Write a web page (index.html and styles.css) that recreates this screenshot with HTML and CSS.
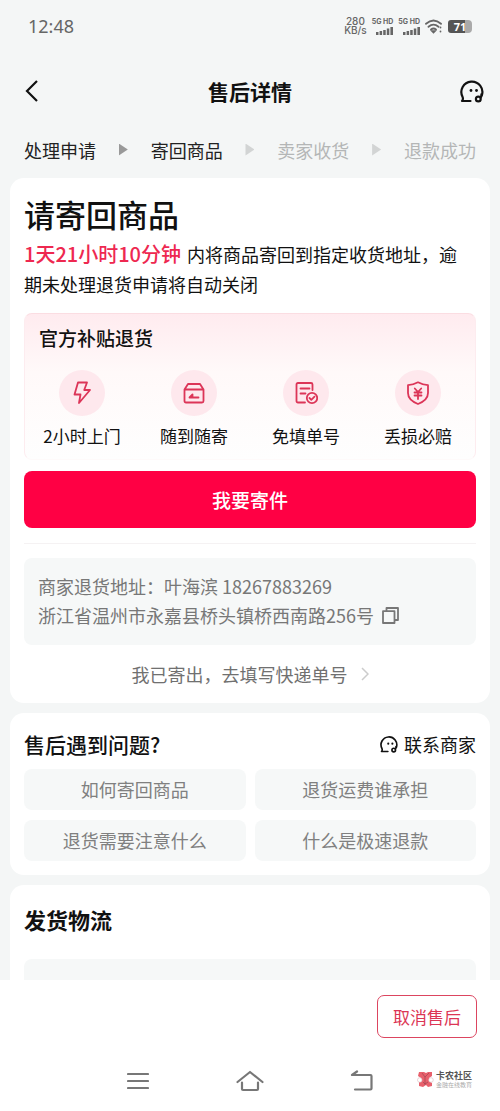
FILE: index.html
```html
<!DOCTYPE html>
<html lang="zh-CN">
<head>
<meta charset="utf-8">
<meta name="viewport" content="width=device-width, initial-scale=1">
<title>售后详情</title>
<link rel="stylesheet" href="styles.css">
</head>
<body>
<svg class="defs" width="0" height="0" aria-hidden="true">
  <symbol id="service" viewBox="0 0 24 24">
    <path d="M10.500 22H2Q3.500 20.500 2.600 18A10.500 10.500 0 1 1 21.800 16.500" fill="none" stroke="currentColor" stroke-width="2.200" stroke-linecap="round" stroke-linejoin="round"/>
    <path d="M21.500 14.500Q21.800 18 20 19.500" fill="none" stroke="currentColor" stroke-width="2.200"/>
    <circle cx="18.300" cy="20" r="2.400" fill="none" stroke="currentColor" stroke-width="2.200"/>
    <circle cx="11" cy="11.500" r="1.400" fill="currentColor"/>
    <circle cx="16.500" cy="11.500" r="1.400" fill="currentColor"/>
  </symbol>
  <symbol id="signal" viewBox="0 0 17 8">
    <path d="M0 5h2.500v3H0zM3.600 4h2.500v4H3.600zM7.200 3h2.500v5H7.200zM10.800 1.500h2.500V8h-2.500zM14.400 0H17v8h-2.600z" fill="currentColor"/>
  </symbol>
</svg>

<header class="top">
  <div class="status">
    <span class="clock">12:48</span>
    <div class="indicators">
      <span class="speed"><span>280</span><span>KB/s</span></span>
      <span class="network"><span>5G HD</span><svg width="17" height="8"><use href="#signal"/></svg></span>
      <span class="network"><span>5G HD</span><svg width="17" height="8"><use href="#signal"/></svg></span>
      <svg class="wifi" width="18" height="15" viewBox="0 0 18 15" fill="none" stroke="currentColor" stroke-width="1.800" stroke-linecap="round">
        <path d="M1 4.800Q8.500-1.700 16 4.800M3.500 7.800Q8.500 3.500 13.500 7.800M6 10.500Q8.500 8.500 11 10.500"/>
        <path d="M7.200 12.200h2.600L8.500 13.500zM15.500 8.500v.1M15.500 12.500v.1"/>
      </svg>
      <span class="battery">71</span>
    </div>
  </div>
  <div class="titlebar">
    <button class="icon-button back" type="button" aria-label="返回">
      <svg width="16" height="24" viewBox="0 0 16 24" fill="none" stroke="currentColor" stroke-width="2.200"><path d="M13 2L3 12l10 10"/></svg>
    </button>
    <h1>售后详情</h1>
    <button class="icon-button" type="button" aria-label="客服"><svg width="24" height="24"><use href="#service"/></svg></button>
  </div>
  <ol class="steps">
    <li class="done">处理申请</li>
    <li class="arrow done" aria-hidden="true"></li>
    <li class="done">寄回商品</li>
    <li class="arrow" aria-hidden="true"></li>
    <li>卖家收货</li>
    <li class="arrow" aria-hidden="true"></li>
    <li>退款成功</li>
  </ol>
</header>

<main>
  <section class="card return">
    <h2>请寄回商品</h2>
    <p class="deadline"><strong>1天21小时10分钟</strong>内将商品寄回到指定收货地址，逾期未处理退货申请将自动关闭</p>
    <div class="benefits">
      <h3>官方补贴退货</h3>
      <ul>
        <li>
          <span class="badge"><svg width="24" height="24" viewBox="0 0 24 24"><path d="M8 1.500h9L14.200 9H20L9 22l1.500-8.500H4.500z"/></svg></span>
          2小时上门
        </li>
        <li>
          <span class="badge"><svg width="24" height="24" viewBox="0 0 24 24"><path d="M2.500 8.500L6 3h12l3.500 5.500V20q0 1.500-1.500 1.500H4Q2.500 21.500 2.500 20zM2.500 8.500h19"/><path d="M7.500 16.500h9M7.500 16.500l3-3v3"/></svg></span>
          随到随寄
        </li>
        <li>
          <span class="badge"><svg width="24" height="24" viewBox="0 0 24 24"><path d="M11 21.500H4Q2.500 21.500 2.500 20V3.500Q2.500 2 4 2h13q1.500 0 1.500 1.500V9M6.500 7.500h9M6.500 12.500h5"/><circle cx="18" cy="17" r="5.200"/><path d="M15.500 17l1.800 1.800 3.200-3.200"/></svg></span>
          免填单号
        </li>
        <li>
          <span class="badge"><svg width="24" height="24" viewBox="0 0 24 24"><path d="M12 1.300Q17 4 22 4.200V12q0 7-10 11Q2 19 2 12V4.200Q7 4 12 1.300z"/><path d="M8.800 7.500L12 11l3.200-3.500M12 11v7M8.500 11.500h7M8.500 14.500h7"/></svg></span>
          丢损必赔
        </li>
      </ul>
    </div>
    <button class="primary" type="button">我要寄件</button>
    <hr>
    <div class="address">
      <p>商家退货地址：叶海滨 18267883269</p>
      <p>浙江省温州市永嘉县桥头镇桥西南路256号
        <button class="copy" type="button" aria-label="复制地址"><svg width="17" height="17" viewBox="0 0 17 17" fill="none" stroke="currentColor" stroke-width="1.800" stroke-linejoin="round"><path d="M1 4.200h11.500V16H1zM4.500 4V1H16v12h-3.300"/></svg></button>
      </p>
    </div>
    <a class="tracking" href="#tracking">我已寄出，去填写快递单号
      <svg width="8" height="14" viewBox="0 0 8 14" fill="none" stroke="#ccc" stroke-width="1.500"><path d="M1 1l6 6-6 6"/></svg>
    </a>
  </section>

  <section class="card help">
    <div class="help-head">
      <h2>售后遇到问题?</h2>
      <a href="#contact"><svg width="18" height="18"><use href="#service"/></svg>联系商家</a>
    </div>
    <div class="questions">
      <button type="button">如何寄回商品</button>
      <button type="button">退货运费谁承担</button>
      <button type="button">退货需要注意什么</button>
      <button type="button">什么是极速退款</button>
    </div>
  </section>

  <section class="card logistics">
    <h2>发货物流</h2>
    <div class="placeholder"></div>
  </section>
</main>

<footer>
  <div class="actions"><button type="button">取消售后</button></div>
  <nav>
    <button type="button" aria-label="最近任务"><svg width="22" height="20" viewBox="0 0 22 20"><path d="M1 3h20M1 10h20M1 17h20"/></svg></button>
    <button type="button" aria-label="主屏幕"><svg width="28" height="22" viewBox="0 0 28 22"><path d="M1.500 12L14 2l12.500 10M6 12.500V19q0 1 1 1h14q1 0 1-1v-6.500"/></svg></button>
    <button type="button" aria-label="后退"><svg width="24" height="22" viewBox="0 0 24 22"><path d="M7 1.500L2 5h18.500q1 0 1 1v12.500q0 1-1 1H5"/></svg></button>
  </nav>
  <div class="watermark">
    <svg width="17" height="17" viewBox="0 0 17 17"><path d="M2 1h5l2 1 2-1h4v4l-3 2v3l3 2v3l-4 1-2-2-3 2-4-1v-4l2-2v-2L1 5z" fill="#e8606c"/><circle cx="2.800" cy="9" r="2.300" fill="#fff" stroke="#d8b8bc" stroke-width=".6"/><circle cx="14" cy="9" r="2.300" fill="#fff" stroke="#d8b8bc" stroke-width=".6"/><path d="M5 2l3 4 4-4M8 6v8M6 11l2 2 3-2" fill="none" stroke="#9d4650" stroke-width=".7"/></svg>
    <span><b>卡农社区</b><small>金融在线教育</small></span>
  </div>
</footer>
</body>
</html>
```
FILE: styles.css
```css
* { box-sizing: border-box; }

body {
  margin: 0;
  height: 100vh;
  display: flex;
  flex-direction: column;
  background: #f4f6f6;
  color: #111;
  font-family: "Noto Sans CJK SC", sans-serif;
  font-size: 18px;
  line-height: 30px;
}

h1, h2, h3, p, ul, ol { margin: 0; padding: 0; }
ul, ol { list-style: none; }
button { font: inherit; color: inherit; background: none; border: 0; padding: 0; }
a { color: inherit; text-decoration: none; }
svg { display: block; flex: none; }
.defs { position: absolute; }

/* Status bar and title */
.status {
  display: flex;
  justify-content: space-between;
  align-items: center;
  height: 52px;
  padding: 0 28px;
  color: #666;
}
.clock { font-family: "Noto Sans", sans-serif; font-size: 18px; }
.indicators { display: flex; align-items: center; gap: 5px; }
.speed {
  display: flex;
  flex-direction: column;
  align-items: center;
  font: 500 10px/9px Inter, sans-serif;
}
.network {
  display: flex;
  flex-direction: column;
  align-items: flex-end;
  gap: 2px;
  font: 700 7px/7px Inter, sans-serif;
}
.battery {
  width: 24px;
  height: 13px;
  border-radius: 3px 4px 4px 3px;
  background: linear-gradient(90deg, #555 70%, #aaa 70%);
  color: #fff;
  font: 700 11px/13px "Noto Sans", sans-serif;
  text-align: center;
}

.titlebar {
  display: grid;
  grid-template-columns: 1fr auto 1fr;
  align-items: center;
  height: 77px;
  padding: 0 16px;
}
.titlebar h1 { font-size: 21px; font-weight: 700; }
.icon-button { display: flex; justify-self: end; }
.back { justify-self: start; padding-left: 8px; }

.steps {
  display: flex;
  justify-content: space-between;
  align-items: center;
  height: 49px;
  padding: 0 24px 8px;
  color: #b4b6b6;
}
.steps .done { color: #222; }
.steps .arrow {
  width: 9px;
  height: 12px;
  background: #d2d4d4;
  clip-path: polygon(0 0, 100% 50%, 0 100%);
}
.steps .arrow.done { background: #999; }

/* Scrolling content */
main {
  flex: 1;
  min-height: 0;
  overflow-y: auto;
  scrollbar-width: none;
  display: flex;
  flex-direction: column;
  gap: 10px;
  padding: 0 10px;
}
.card { flex: none; padding: 14px; border-radius: 14px; background: #fff; }

.return h2 { font-size: 31px; font-weight: 500; line-height: 44px; }
.deadline { margin-top: 3px; padding-right: 10px; }
.deadline strong { margin-right: 6px; color: #ee2850; font-size: 20px; font-weight: 500; }

.benefits {
  margin-top: 14px;
  padding: 0 1px 8px;
  border: 1px solid #fdecef;
  border-top-color: #fbdde2;
  border-bottom-color: #fefafa;
  border-radius: 8px;
  background: linear-gradient(#ffebef, #fff9f9 40%, #fefefe);
}
.benefits h3 { padding: 9px 13px 0; font-size: 19px; font-weight: 500; }
.benefits ul { display: grid; grid-template-columns: repeat(4, 1fr); margin-top: 17px; }
.benefits li {
  display: flex;
  flex-direction: column;
  align-items: center;
  gap: 5px;
  font-size: 17px;
}
.badge {
  display: grid;
  place-items: center;
  width: 46px;
  height: 46px;
  border-radius: 50%;
  background: #fee8ed;
}
.badge svg {
  fill: none;
  stroke: #dc3558;
  stroke-width: 1.8;
  stroke-linecap: round;
  stroke-linejoin: round;
}

.primary {
  display: block;
  width: 100%;
  height: 57px;
  margin-top: 11px;
  border-radius: 8px;
  background: #ff0044;
  color: #fff;
  font-size: 19px;
  font-weight: 500;
}
hr { height: 1px; margin: 15px 0 14px; border: 0; background: #f5f2f3; }

.address {
  padding: 14px 14px 15px;
  border-radius: 8px;
  background: #f6f8f8;
  color: #777;
  line-height: 29px;
}
.address p { display: flex; align-items: center; gap: 8px; }
.tracking {
  display: flex;
  justify-content: center;
  align-items: center;
  gap: 13px;
  margin-top: 14px;
  color: #707070;
}

.help-head {
  display: flex;
  justify-content: space-between;
  align-items: center;
  padding: 2px 0 10px;
}
.help h2 { font-size: 21px; font-weight: 500; }
.help-head a { display: flex; align-items: center; gap: 6px; }
.questions { display: grid; grid-template-columns: 1fr 1fr; gap: 10px 9px; }
.questions button {
  height: 41px;
  padding-bottom: 2px;
  border-radius: 8px;
  background: #f6f8f8;
  color: #808080;
}

.logistics h2 { padding: 5px 0 6px; font-size: 22px; font-weight: 700; }
.placeholder { height: 120px; margin-top: 19px; border-radius: 8px; background: #f6f8f8; }

/* Bottom bar */
footer { position: relative; background: #fff; }
.actions { display: flex; justify-content: flex-end; padding: 15px 23px 14px; }
.actions button {
  width: 100px;
  height: 43px;
  border: 1px solid #dc4560;
  border-radius: 7px;
  color: #dc3555;
  font-size: 17px;
}
nav { display: flex; justify-content: center; gap: 84px; height: 59px; }
nav button { display: grid; place-items: center; width: 28px; height: 58px; }
nav svg {
  fill: none;
  stroke: #777;
  stroke-width: 2.2;
  stroke-linecap: round;
  stroke-linejoin: round;
}
.watermark {
  position: absolute;
  right: 28px;
  bottom: 23px;
  display: flex;
  align-items: center;
  gap: 2px;
  color: #555;
}
.watermark span { display: flex; flex-direction: column; }
.watermark b { font-size: 9px; line-height: 11px; }
.watermark small { color: #aaa; font-size: 6px; line-height: 7px; }
```
